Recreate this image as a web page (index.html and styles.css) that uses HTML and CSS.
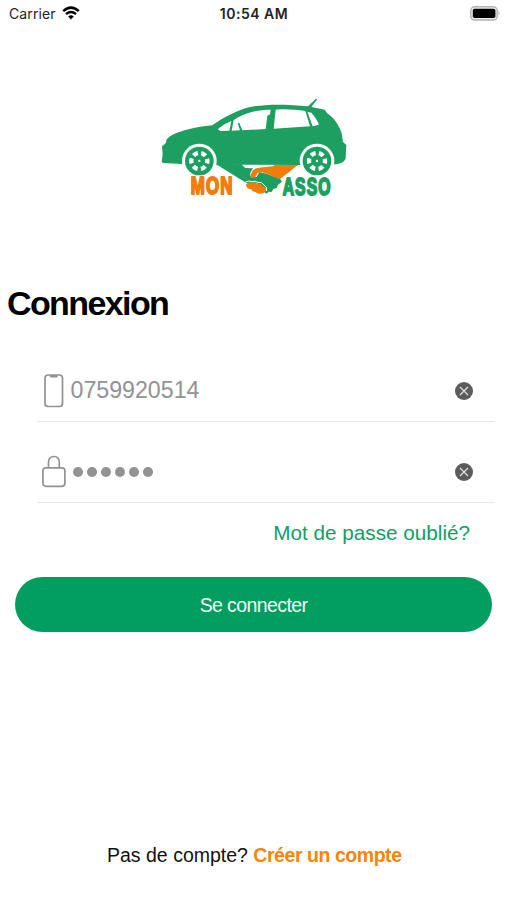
FILE: index.html
```html
<!DOCTYPE html>
<html lang="fr">
	<head>
		<meta charset="utf-8">
		<title>Connexion</title>
		<link rel="stylesheet" href="styles.css">
	</head>

	<body>
		<div class="statusbar">
			<div class="carrier">
				<span>Carrier</span>
				<svg class="wifi" width="18" height="14" viewBox="0 0 18 14">
					<path d="M1.2 5.1 Q9 -1.8 16.8 5.1" fill="none" stroke="#000" stroke-width="2.5"/>
					<path d="M4 8.1 Q9 3.8 14 8.1" fill="none" stroke="#000" stroke-width="2.4"/>
					<path d="M6.2 10.4 Q9 8.2 11.8 10.4 L9 13.4 Z"/>
				</svg>
			</div>
			<div class="time">10:54 AM</div>
			<svg class="battery" width="31" height="15" viewBox="0 0 31 15">
				<rect x=".8" y=".8" width="26.4" height="13.2" rx="3.8" fill="#eee" stroke="#b3b3b3" stroke-width="1.4"/>
				<rect x="2.8" y="2.8" width="22.6" height="9.2" rx="1.8"/>
				<path d="M28.6 5 Q30.8 7.4 28.6 9.8 Z" fill="#aaa"/>
			</svg>
		</div>

		<svg class="logo" width="210" height="125" viewBox="0 0 630 375">
			<!-- carrosserie -->
			<path fill="#1c9f60" d="M35 230 L38 208 L36 184 L47 175 L50 163 C62 150 80 143 104 136 C132 128 160 124 187 121 C222 96 262 75 300 66 C345 57 408 57 474 64 L498 41 L502 43 L484 66 L524 74 L531 84 C552 99 567 119 575 145 L579 171 L589 180 L587 219 C584 232 571 237 554 238 L448 240 L283 239 L202 240 L96 237 L39 234 Z"/>
			<!-- vitres -->
			<path fill="#fff" d="M203 133 C216 122 229 114 244 108 L238 137 L211 138 Z"/>
			<path fill="#fff" d="M251 105 C281 86 319 74 362 74 L360 88 L352 92 L347 132 L277 136 L268 114 L263 114 L270 136 L245 137 Z"/>
			<path fill="#fff" d="M377 74 C408 71 438 74 466 78 L480 124 L371 131 Z"/>
			<path fill="#fff" d="M472 80 L484 83 C494 94 502 106 507 119 L488 124 Z"/>
			<!-- poignee de main -->
			<path fill="#1c9f60" d="M202 238 H274 L286 249 L309 250 L300 265 L303 277 L320 276 L328 261 L350 266 L390 281 L396 290 L384 299 L380 309 L370 312 L365 321 L356 320 L350 326 L343 322 L334 301 L315 293 L289 294 L202 240 Z"/>
			<path fill="#f07d0a" d="M444 240 H374 L367 244 L338 247 L319 250 L308 256 L302 269 L304 277 L317 275 L323 263 L335 261 L353 267 L389 283 Z"/>
			<path fill="none" stroke="#fff" stroke-width="3" d="M285 292 Q296 285 306 290 Q316 286 323 292 Q337 290 342 300 Q352 306 350 318"/>
			<path fill="#f07d0a" d="M288 299 Q294 289 304 294 Q313 288 321 296 Q333 293 337 303 Q349 305 348 315 Q344 326 334 325 Q324 329 317 321 Q307 321 304 313 Q289 312 288 299 Z"/>
			<!-- roues -->
			<g id="roue">
				<circle cx="148" cy="228" r="52" fill="#fff"/>
				<circle cx="148" cy="228" r="43" fill="#1c9f60"/>
				<circle cx="148" cy="228" r="24" fill="none" stroke="#fff" stroke-width="13" stroke-dasharray="14.93 10.2" stroke-dashoffset="7.46"/>
				<circle cx="148" cy="228" r="3.5" fill="#fff"/>
			</g>
			<use href="#roue" x="353"/>
			<text class="logo-mon" x="122" y="327" textLength="129" lengthAdjust="spacingAndGlyphs">MON</text>
			<path fill="#fff" d="M393 334 L397 294 L405 275 H430 V334 Z"/>
			<text class="logo-asso" x="398" y="329" textLength="147" lengthAdjust="spacingAndGlyphs">ASSO</text>
		</svg>

		<h1 class="titre">Connexion</h1>

		<div class="formulaire">
			<div class="champ">
				<svg class="icone" width="26" height="34" viewBox="0 0 26 34">
					<rect x="4" y="1" width="17.5" height="31.5" rx="3" fill="none" stroke="#929295" stroke-width="1.7"/>
					<path d="M8.3 1 L9.3 3.4 H16.2 L17.2 1 Z" fill="#929295"/>
				</svg>
				<span class="telephone">0759920514</span>
				<svg class="effacer" width="18" height="18" viewBox="0 0 18 18">
					<circle cx="9" cy="9" r="9" fill="#5c5c5c"/>
					<path d="M5 5 L13 13 M13 5 L5 13" stroke="#e0e0e0" stroke-width="1.3"/>
				</svg>
			</div>
			<div class="champ">
				<svg class="icone" width="26" height="34" viewBox="0 0 26 34">
					<rect x="1.9" y="12.8" width="22" height="18.5" rx="3" fill="none" stroke="#929295" stroke-width="1.7"/>
					<path d="M7.5 12.8 V7.3 Q7.5 1.5 12.9 1.5 Q18.3 1.5 18.3 7.3 V12.8" fill="none" stroke="#929295" stroke-width="1.7"/>
				</svg>
				<div class="points"><i></i><i></i><i></i><i></i><i></i><i></i></div>
				<svg class="effacer" width="18" height="18" viewBox="0 0 18 18">
					<circle cx="9" cy="9" r="9" fill="#5c5c5c"/>
					<path d="M5 5 L13 13 M13 5 L5 13" stroke="#e0e0e0" stroke-width="1.3"/>
				</svg>
			</div>
		</div>

		<a class="oublie">Mot de passe oublié?</a>
		<button class="connecter">Se connecter</button>

		<div class="inscription">Pas de compte? <a class="creer">Créer un compte</a></div>
	</body>
</html>
```
FILE: styles.css
```css
* {
	box-sizing: border-box;
}

body {
	margin: 0;
	height: 900px;
	display: flex;
	flex-direction: column;
	background-color: #fff;
	font-family: "Liberation Sans", Arial, sans-serif;
	color: #111;
}

.statusbar {
	display: grid;
	grid-template-columns: 1fr auto 1fr;
	align-items: center;
	height: 27px;
	padding: 0 6px 0 9px;
	font-family: Inter, sans-serif;
	font-size: 14px;
	color: #222;
}

.carrier {
	display: flex;
	align-items: center;
	gap: 6px;
	letter-spacing: 0.1px;
}

.wifi {
	margin-top: -2px;
}

.time {
	margin-right: 2px;
	font-weight: 600;
	letter-spacing: 0.5px;
}

.battery {
	justify-self: end;
}

.logo {
	display: block;
	margin: 58px 0 0 150px;
}

.logo-mon,
.logo-asso {
	font-family: "Liberation Sans", Arial, sans-serif;
	font-weight: bold;
	font-size: 70px;
	letter-spacing: 5px;
	stroke-width: 6px;
	stroke-linejoin: round;
}

.logo-mon {
	fill: #f07d0a;
	stroke: #f07d0a;
}

.logo-asso {
	fill: #1c9f60;
	stroke: #1c9f60;
}

.titre {
	margin: 74px 0 0 7px;
	font-size: 34px;
	line-height: 39px;
	letter-spacing: -1.6px;
	color: #000;
}

.formulaire {
	margin: 18px 12px 0 37px;
}

.champ {
	display: flex;
	align-items: center;
	height: 81px;
	padding: 19px 22px 0 4px;
	border-bottom: 1px solid #e6e6e6;
}

.telephone {
	margin-left: 3.5px;
	font-size: 23.2px;
	color: #929295;
}

.points {
	display: flex;
	gap: 4px;
	margin-left: 5.5px;
	padding-top: 1px;
}

.points i {
	width: 10px;
	height: 10px;
	border-radius: 50%;
	background-color: #929295;
}

.effacer {
	margin-left: auto;
}

.oublie {
	align-self: flex-end;
	margin: 18px 37px 0 0;
	font-size: 20.7px;
	line-height: 24px;
	color: #149d64;
}

.connecter {
	height: 55px;
	margin: 32px 15px 0;
	padding-top: 3px;
	border: none;
	border-radius: 28px;
	background-color: #029e60;
	font-family: inherit;
	font-size: 19.5px;
	letter-spacing: -0.6px;
	color: #f4fff8;
}

.inscription {
	margin: auto 0 33px 107px;
	font-size: 19.5px;
	line-height: 23px;
}

.creer {
	font-weight: bold;
	letter-spacing: -0.45px;
	color: #f98409;
}
```
